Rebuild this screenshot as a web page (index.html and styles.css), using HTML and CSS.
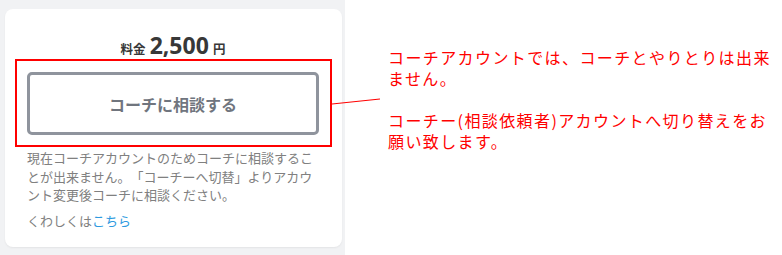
FILE: index.html
```html
<!DOCTYPE html>
<html lang="ja">

<head>
    <meta charset="utf-8">
    <meta name="viewport" content="width=device-width, initial-scale=1.0">
    <title>コーチに相談</title>
    <link rel="stylesheet" href="styles.css">
</head>

<body>
    <div class="side">
        <section class="kort">
            <p class="pris"><span class="lille">料金</span> <span class="tal">2,500</span> <span class="lille">円</span></p>
            <div class="markering">
                <button class="knap">コーチに相談する</button>
            </div>
            <p class="besked">現在コーチアカウントのためコーチに相談することが出来ません。「コーチーへ切替」よりアカウント変更後コーチに相談ください。</p>
            <p class="mere">くわしくは<a href="#">こちら</a></p>
        </section>
    </div>

    <svg class="streg" width="60" height="12" viewBox="0 0 60 12">
        <line x1="0" y1="8" x2="48" y2="3" stroke="#ff0000" stroke-width="1.2"/>
    </svg>

    <aside class="note">
        <p>コーチアカウントでは、コーチとやりとりは出来ません。</p>
        <p>コーチー(相談依頼者)アカウントへ切り替えをお願い致します。</p>
    </aside>
</body>

</html>
```

FILE: styles.css
```css
* {
    box-sizing: border-box;
    padding: 0;
    margin: 0;
}

body {
    display: flex;
    align-items: flex-start;
    font-family: "Noto Sans", "Noto Sans CJK JP", sans-serif;
    background: white;
    text-spacing-trim: space-all;
}

.side {
    width: 345px;
    height: 255px;
    background-color: #f1f2f4;
    padding: 9px 3px 0 5px;
}

.kort {
    background: white;
    border-radius: 8px;
    height: 238px;
    padding: 23px 23px 0 22px;
    box-shadow: 0 1px 2px rgba(0, 0, 0, 0.06);
}

.pris {
    text-align: center;
    color: #383838;
    font-weight: bold;
    line-height: 26px;
    height: 27px;
}

.pris .lille {
    font-size: 12.5px;
}

.pris .tal {
    font-size: 23px;
}

.markering {
    border: 2px solid #ff0000;
    margin: 0 -13px 0 -12px;
    padding: 11px 11px 10px 10px;
}

.knap {
    display: block;
    width: 100%;
    height: 63px;
    background: white;
    border: 3px solid #8f949d;
    border-radius: 5px;
    font-family: "Noto Sans CJK JP", sans-serif;
    font-size: 16px;
    font-weight: bold;
    color: #70757e;
}

.besked {
    font-family: "Noto Sans CJK JP", sans-serif;
    font-size: 13px;
    line-height: 18.6px;
    color: #808080;
    margin-top: 2px;
}

.mere {
    font-family: "Noto Sans CJK JP", sans-serif;
    font-size: 13px;
    line-height: 18.6px;
    color: #808080;
    margin-top: 7px;
}

.mere a {
    color: #2d9ae0;
    text-decoration: none;
}

.streg {
    position: absolute;
    left: 332px;
    top: 96px;
}

.note {
    width: 392px;
    margin-left: 43px;
    padding-top: 47px;
    font-family: "Noto Sans CJK JP", sans-serif;
    font-size: 16px;
    letter-spacing: 1.4px;
    line-height: 21px;
    color: #ff0000;
}

.note p + p {
    margin-top: 21px;
}
```
